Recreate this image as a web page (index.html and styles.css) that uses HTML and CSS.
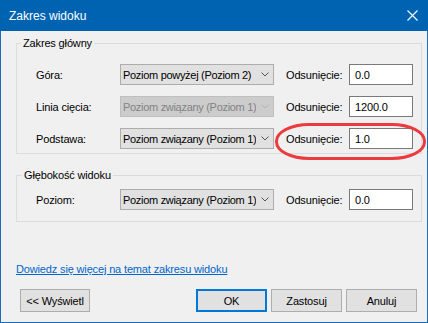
FILE: index.html
```html
<!DOCTYPE html>
<html lang="pl">
<head>
  <meta charset="UTF-8" />
  <title>Zakres widoku</title>
  <link rel="stylesheet" href="styles.css">
</head>
<body>
  <div class="dialog">
    <div class="titlebar">
      <span class="title">Zakres widoku</span>
      <svg class="close" width="11" height="11" viewBox="0 0 11 11"><path d="M0.5 0.5L10.5 10.5M10.5 0.5L0.5 10.5" stroke="#fff" stroke-width="1.1"/></svg>
    </div>

    <div class="content">
      <fieldset class="group main">
        <legend>Zakres główny</legend>
        <div class="grid">
          <label>Góra:</label>
          <div class="combo"><span>Poziom powyżej (Poziom 2)</span><svg class="chev" width="8" height="5" viewBox="0 0 8 5"><polyline points="0.5,0.5 4,4 7.5,0.5" fill="none" stroke="#555" stroke-width="1"/></svg></div>
          <label class="off">Odsunięcie:</label>
          <input class="text" value="0.0" readonly>

          <label>Linia cięcia:</label>
          <div class="combo disabled"><span>Poziom związany (Poziom 1)</span><svg class="chev" width="8" height="5" viewBox="0 0 8 5"><polyline points="0.5,0.5 4,4 7.5,0.5" fill="none" stroke="#b5b5b5" stroke-width="1"/></svg></div>
          <label class="off">Odsunięcie:</label>
          <input class="text" value="1200.0" readonly>

          <label>Podstawa:</label>
          <div class="combo"><span>Poziom związany (Poziom 1)</span><svg class="chev" width="8" height="5" viewBox="0 0 8 5"><polyline points="0.5,0.5 4,4 7.5,0.5" fill="none" stroke="#555" stroke-width="1"/></svg></div>
          <label class="off">Odsunięcie:</label>
          <input class="text" value="1.0" readonly>
        </div>
        <div class="mark"></div>
      </fieldset>

      <fieldset class="group depth">
        <legend>Głębokość widoku</legend>
        <div class="grid">
          <label>Poziom:</label>
          <div class="combo"><span>Poziom związany (Poziom 1)</span><svg class="chev" width="8" height="5" viewBox="0 0 8 5"><polyline points="0.5,0.5 4,4 7.5,0.5" fill="none" stroke="#555" stroke-width="1"/></svg></div>
          <label class="off">Odsunięcie:</label>
          <input class="text" value="0.0" readonly>
        </div>
      </fieldset>

      <a class="help" href="#">Dowiedz się więcej na temat zakresu widoku</a>

      <div class="buttons">
        <button class="btn show">&lt;&lt; Wyświetl</button>
        <div class="right">
          <button class="btn default">OK</button>
          <button class="btn">Zastosuj</button>
          <button class="btn">Anuluj</button>
        </div>
      </div>
    </div>
  </div>
</body>
</html>
```

FILE: styles.css
```css
body {
  margin: 0;
  font-family: "Liberation Sans", Arial, sans-serif;
  font-size: 11px;
  letter-spacing: -0.15px;
  color: #000;
  background: #f0f0f0;
}
.dialog {
  width: 428px;
  height: 323px;
  box-sizing: border-box;
  border: 1px solid #1a6bb8;
  border-top: none;
  background: #f0f0f0;
  display: flex;
  flex-direction: column;
}
.titlebar {
  height: 31px;
  margin: 0 -1px;
  background: #0063b1;
  color: #fff;
  display: flex;
  align-items: center;
  justify-content: space-between;
  padding: 0 9px 0 9px;
  flex-shrink: 0;
}
.title {
  font-size: 12px;
  letter-spacing: 0;
}
.close {
  margin-right: 1px;
}
.content {
  flex: 1;
  padding: 5px 5px 0 15px;
  display: flex;
  flex-direction: column;
}
.group {
  position: relative;
  margin: 0;
  border: 1px solid #dcdcdc;
  padding: 14px 0 4px 0;
  min-width: 0;
}
.group legend {
  padding: 0 2px;
  margin-left: 4px;
  line-height: 14px;
}
.depth {
  margin-top: 14px;
  padding-top: 7px;
  padding-bottom: 11px;
}
.depth legend {
  margin-left: 5px;
}
.grid {
  margin-left: 19px;
  display: grid;
  grid-template-columns: 84px 154px 75px 64px;
  grid-auto-rows: 21px;
  row-gap: 11px;
  align-items: center;
}
.grid label.off {
  padding-left: 12px;
}
.combo {
  height: 21px;
  box-sizing: border-box;
  border: 1px solid #adadad;
  background: #e1e1e1;
  display: flex;
  align-items: center;
  padding: 0 4px 0 2px;
  overflow: hidden;
  letter-spacing: -0.3px;
}
.combo span {
  flex: 1;
  white-space: nowrap;
  overflow: hidden;
}
.combo .chev {
  flex-shrink: 0;
  margin-left: 5px;
}
.combo.disabled {
  background: #cccccc;
  border-color: #bfbfbf;
  color: #838383;
}
.text {
  width: 64px;
  height: 21px;
  box-sizing: border-box;
  border: 1px solid #7a7a7a;
  background: #fff;
  font: inherit;
  letter-spacing: inherit;
  padding: 0 5px;
  margin: 0;
  outline: none;
}
.mark {
  position: absolute;
  left: 258px;
  top: 73px;
  width: 151px;
  height: 37px;
  box-sizing: border-box;
  border: 3px solid #ec3b3f;
  border-radius: 34px / 18px;
}
.help {
  margin-top: 40px;
  line-height: 15px;
  color: #0066cc;
  align-self: flex-start;
}
.buttons {
  margin-top: 12px;
  display: flex;
  justify-content: space-between;
  padding: 0 5px 0 4px;
}
.right {
  display: flex;
  gap: 4px;
}
.btn {
  width: 71px;
  height: 23px;
  box-sizing: border-box;
  border: 1px solid #adadad;
  background: #e1e1e1;
  font: inherit;
  letter-spacing: inherit;
  color: #000;
  padding: 0;
  margin: 0;
}
.btn.show {
  width: 70px;
}
.btn.default {
  border: 2px solid #0078d7;
}
```
